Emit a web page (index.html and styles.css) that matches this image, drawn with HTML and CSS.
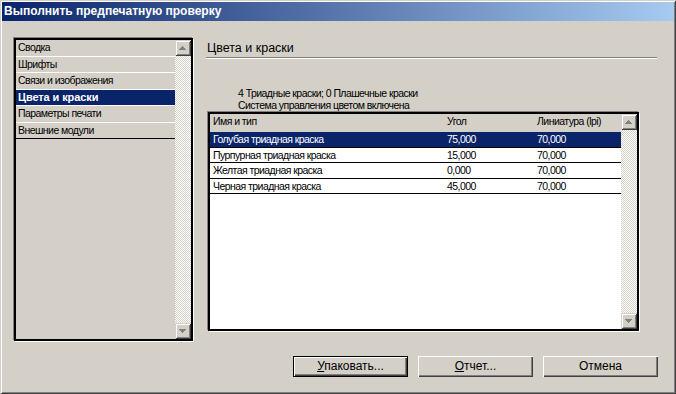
FILE: index.html
```html
<!DOCTYPE html>
<html lang="ru">
<head>
<meta charset="utf-8">
<title>Выполнить предпечатную проверку</title>
<link rel="stylesheet" href="styles.css">
</head>
<body>
<div class="window">
  <div class="titlebar">Выполнить предпечатную проверку</div>
  <div class="body">
    <div class="sidebar">
      <ul class="nav">
        <li>Сводка</li>
        <li>Шрифты</li>
        <li>Связи и изображения</li>
        <li class="sel">Цвета и краски</li>
        <li>Параметры печати</li>
        <li class="last">Внешние модули</li>
      </ul>
      <div class="vscroll">
        <div class="sbtn"><svg width="16" height="16" viewBox="0 0 16 16"><g fill="#808080"><rect x="7" y="6" width="1" height="1"/><rect x="6" y="7" width="3" height="1"/><rect x="5" y="8" width="5" height="1"/><rect x="4" y="9" width="7" height="1"/></g></svg></div>
        <div class="track"></div>
        <div class="sbtn"><svg width="16" height="16" viewBox="0 0 16 16"><g fill="#808080"><rect x="4" y="6" width="7" height="1"/><rect x="5" y="7" width="5" height="1"/><rect x="6" y="8" width="3" height="1"/><rect x="7" y="9" width="1" height="1"/></g></svg></div>
      </div>
    </div>
    <div class="main">
      <div class="heading">Цвета и краски</div>
      <div class="etch"></div>
      <div class="info">
        <div>4 Триадные краски; 0 Плашечные краски</div>
        <div>Система управления цветом включена</div>
      </div>
      <div class="grid">
        <div class="rows">
          <div class="row head"><span class="c1">Имя и тип</span><span class="c2">Угол</span><span class="c3">Линиатура (lpi)</span></div>
          <div class="row sel"><span class="c1">Голубая триадная краска</span><span class="c2">75,000</span><span class="c3">70,000</span></div>
          <div class="row"><span class="c1">Пурпурная триадная краска</span><span class="c2">15,000</span><span class="c3">70,000</span></div>
          <div class="row"><span class="c1">Желтая триадная краска</span><span class="c2">0,000</span><span class="c3">70,000</span></div>
          <div class="row"><span class="c1">Черная триадная краска</span><span class="c2">45,000</span><span class="c3">70,000</span></div>
        </div>
        <div class="vscroll">
          <div class="sbtn"><svg width="16" height="16" viewBox="0 0 16 16"><g fill="#808080"><rect x="7" y="6" width="1" height="1"/><rect x="6" y="7" width="3" height="1"/><rect x="5" y="8" width="5" height="1"/><rect x="4" y="9" width="7" height="1"/></g></svg></div>
          <div class="track"></div>
          <div class="sbtn"><svg width="16" height="16" viewBox="0 0 16 16"><g fill="#808080"><rect x="4" y="6" width="7" height="1"/><rect x="5" y="7" width="5" height="1"/><rect x="6" y="8" width="3" height="1"/><rect x="7" y="9" width="1" height="1"/></g></svg></div>
        </div>
      </div>
    </div>
  </div>
  <div class="footer">
    <button class="btn default"><u>У</u>паковать...</button>
    <button class="btn"><u>О</u>тчет...</button>
    <button class="btn">Отмена</button>
  </div>
</div>
</body>
</html>
```

FILE: styles.css
```css
* { box-sizing: border-box; }
html, body { margin: 0; padding: 0; }
body {
  width: 676px;
  height: 394px;
  overflow: hidden;
  background: #d4d0c8;
  color: #000;
  font-family: "Liberation Sans", Arial, sans-serif;
  font-size: 10.5px;
  letter-spacing: -0.55px;
}
.window {
  width: 676px;
  height: 394px;
  padding: 2px;
  background: #d4d0c8;
  box-shadow: inset 1px 1px 0 #d4d0c8, inset -1px -1px 0 #404040, inset 2px 2px 0 #fff, inset -2px -2px 0 #808080;
  display: flex;
  flex-direction: column;
}
.titlebar {
  height: 19px;
  background: linear-gradient(to right, #0a246a, #a6caf0);
  color: #fff;
  font-weight: bold;
  font-size: 12px;
  letter-spacing: 0;
  line-height: 19px;
  padding-left: 2px;
  white-space: nowrap;
}
.body {
  display: flex;
  padding: 17px 0 0 12px;
}
.sidebar {
  width: 179px;
  height: 303px;
  border: 2px solid #000;
  box-shadow: -1px -1px 0 #808080, 1px 1px 0 #fff;
  display: flex;
}
.nav {
  list-style: none;
  margin: 0;
  padding: 0;
  flex: 1;
}
.nav li {
  height: 16.5px;
  line-height: 14px;
  border-bottom: 1px solid #fff;
  padding-left: 2px;
  white-space: nowrap;
}
.nav li.last { border-bottom-color: #000; }
.nav li.sel {
  background: #0a246a;
  color: #fff;
  font-size: 11px;
  font-weight: bold;
  letter-spacing: -0.1px;
}
.vscroll {
  width: 16px;
  display: flex;
  flex-direction: column;
  background-color: #fff;
  background-image: conic-gradient(#d4d0c8 25%, #fff 0 50%, #d4d0c8 0 75%, #fff 0);
  background-size: 2px 2px;
}
.sbtn {
  width: 16px;
  height: 16px;
  background: #d4d0c8;
  box-shadow: inset 1px 1px 0 #d4d0c8, inset -1px -1px 0 #404040, inset 2px 2px 0 #fff, inset -2px -2px 0 #808080;
}
.sbtn svg { display: block; }
.track { flex: 1; }
.main {
  width: 451px;
  margin-left: 13px;
}
.heading {
  margin-top: 2px;
  font-size: 12.5px;
  letter-spacing: 0;
  line-height: 16px;
  padding-left: 1px;
}
.etch {
  margin-top: 1px;
  height: 2px;
  border-top: 1px solid #808080;
  border-bottom: 1px solid #fff;
}
.info {
  margin-top: 28px;
  padding-left: 32px;
  line-height: 12px;
}
.grid {
  margin: 1px 0 0 2px;
  width: 431px;
  height: 219px;
  border: 2px solid #000;
  box-shadow: -1px -1px 0 #808080, 1px 1px 0 #fff;
  display: flex;
  background: #fff;
}
.rows { flex: 1; }
.row {
  display: flex;
  height: 15.5px;
  line-height: 14.5px;
  border-bottom: 1px solid #000;
  white-space: nowrap;
}
.row.head {
  height: 18px;
  line-height: 15px;
  background: #d4d0c8;
  border-bottom: none;
}
.row.sel {
  background: #0a246a;
  color: #fff;
}
.c1 { width: 234px; padding-left: 3px; }
.c2 { width: 90px; padding-left: 3px; }
.c3 { flex: 1; padding-left: 3px; }
.footer {
  display: flex;
  justify-content: flex-end;
  gap: 10px;
  padding-right: 16px;
  margin-top: 15px;
}
.btn {
  width: 115px;
  height: 21px;
  margin: 0;
  padding: 0;
  border: none;
  background: #d4d0c8;
  color: #000;
  font-family: "Liberation Sans", Arial, sans-serif;
  font-size: 12px;
  letter-spacing: 0;
  line-height: 21px;
  text-align: center;
  box-shadow: inset 1px 1px 0 #fff, inset -1px -1px 0 #404040, inset -2px -2px 0 #808080;
}
.btn.default {
  border: 1px solid #000;
  line-height: 19px;
}
```
